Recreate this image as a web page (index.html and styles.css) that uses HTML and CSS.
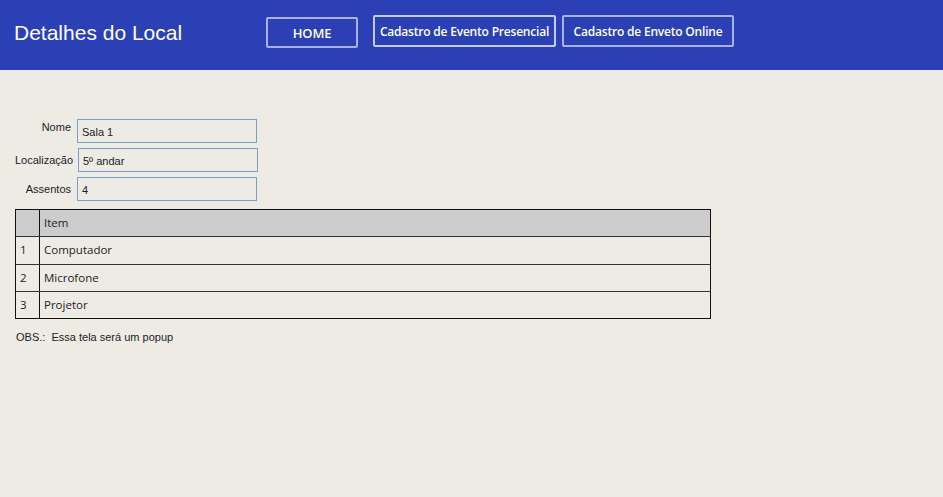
FILE: index.html
```html
<!DOCTYPE html>
<html lang="pt">
<head>
<meta charset="utf-8">
<title>Detalhes do Local</title>
<link rel="stylesheet" href="styles.css">
</head>
<body>
<header class="topbar">
  <h1 class="title">Detalhes do Local</h1>
  <nav class="nav">
    <a class="btn btn-home">HOME</a>
    <a class="btn btn-pres">Cadastro de Evento Presencial</a>
    <a class="btn btn-online">Cadastro de Enveto Online</a>
  </nav>
</header>
<main class="content">
  <div class="form">
    <div class="row row-top"><span class="label">Nome</span><div class="input in-nome">Sala 1</div></div>
    <div class="row"><span class="label">Localização</span><div class="input in-loc">5º andar</div></div>
    <div class="row"><span class="label">Assentos</span><div class="input in-ass">4</div></div>
  </div>
  <div class="table">
    <div class="tr th"><div class="c1"></div><div class="c2">Item</div></div>
    <div class="tr"><div class="c1">1</div><div class="c2">Computador</div></div>
    <div class="tr"><div class="c1">2</div><div class="c2">Microfone</div></div>
    <div class="tr"><div class="c1">3</div><div class="c2">Projetor</div></div>
  </div>
  <p class="obs">OBS.:&nbsp; Essa tela será um popup</p>
</main>
</body>
</html>
```
FILE: styles.css
```css
html, body { margin: 0; padding: 0; }
body {
  background: #eeebe5;
  font-family: "Liberation Sans", Arial, sans-serif;
  color: #1a1a1a;
  width: 943px;
  height: 497px;
  overflow: hidden;
}
.topbar {
  height: 70px;
  background: #2b40b5;
  display: flex;
  align-items: flex-start;
}
.title {
  margin: 20px 0 0 14px;
  font-family: "Liberation Sans", Arial, sans-serif;
  font-weight: normal;
  font-size: 21px;
  line-height: 26px;
  color: #ffffff;
  width: 252px;
}
.nav {
  display: flex;
  align-items: flex-start;
}
.btn {
  display: flex;
  align-items: center;
  justify-content: center;
  box-sizing: border-box;
  border: 2px solid #a9b1e2;
  border-radius: 2px;
  color: #ffffff;
  font-family: "Open Sans", "DejaVu Sans", sans-serif;
  font-size: 12px;
  font-weight: 600;
  white-space: nowrap;
  letter-spacing: -0.2px;
}
.btn-home { margin-top: 17px; width: 92px; height: 31px; font-size: 13px; }
.btn-pres { margin-top: 15px; margin-left: 15px; width: 183px; height: 32px; border-color: #c5cbef; }
.btn-online { margin-top: 15px; margin-left: 6px; width: 172px; height: 32px; }

.content { padding: 49px 0 0 15px; }
.form { display: flex; flex-direction: column; gap: 5px; }
.row { display: flex; align-items: center; }
.row-top { align-items: flex-start; }
.row-top .label { padding-top: 1px; }
.label {
  width: 56px;
  text-align: right;
  font-size: 11px;
  line-height: 14px;
  color: #222;
}
.input {
  box-sizing: border-box;
  width: 180px;
  height: 24px;
  border: 1px solid #7f9ec6;
  font-size: 11px;
  line-height: 24px;
  padding-left: 4px;
  color: #222;
}
.in-nome { margin-left: 6px; }
.in-loc { margin-left: 7px; }
.in-ass { margin-left: 6px; }

.table {
  margin-top: 8px;
  width: 696px;
  box-sizing: border-box;
  border: 1px solid #111;
  font-family: "Open Sans", "DejaVu Sans", sans-serif;
  font-size: 11.5px;
  color: #222;
}
.tr {
  display: flex;
  height: 27px;
  border-top: 1px solid #333;
  box-sizing: border-box;
}
.tr:first-child { border-top: none; height: 26px; }
.tr.th { background: #cccccc; }
.tr:nth-child(2) { height: 28px; }
.c1 {
  width: 24px;
  border-right: 1px solid #111;
  padding-left: 4px;
  box-sizing: border-box;
  line-height: 26px;
}
.c2 { padding-left: 4px; line-height: 26px; }
.obs {
  margin: 12px 0 0 1px;
  font-size: 11px;
  color: #222;
}
```
